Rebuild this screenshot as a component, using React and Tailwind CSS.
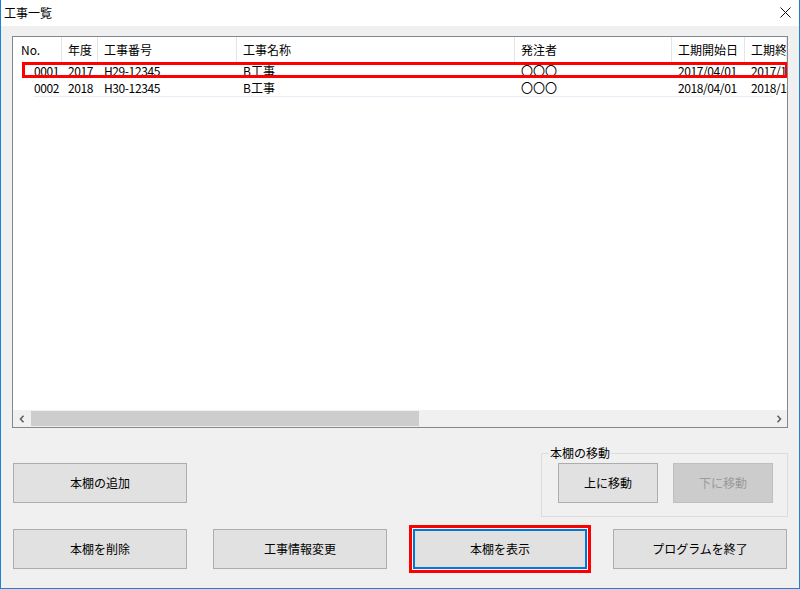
import React from "react";

const cols = [
  { label: "No.", w: 49 },
  { label: "年度", w: 36 },
  { label: "工事番号", w: 139 },
  { label: "工事名称", w: 278 },
  { label: "発注者", w: 157 },
  { label: "工期開始日", w: 73 },
  { label: "工期終了日", w: 42 },
];

const rows = [
  ["0001", "2017", "H29-12345", "B工事", "〇〇〇", "2017/04/01", "2017/10/31"],
  ["0002", "2018", "H30-12345", "B工事", "〇〇〇", "2018/04/01", "2018/10/31"],
];

function Button({ children, className = "", disabled, focused }) {
  return (
    <button
      className={
        "h-[40px] flex items-center justify-center text-[12px] " +
        (disabled
          ? "bg-[#cccccc] border border-[#bfbfbf] text-[#9a9a9a] "
          : focused
          ? "bg-[#e1e1e1] border-2 border-[#0078d7] text-black "
          : "bg-[#e1e1e1] border border-[#adadad] text-black ") +
        className
      }
    >
      {children}
    </button>
  );
}

export default function App() {
  return (
    <div className="w-[800px] h-[589px] bg-[#f0f0f0] border-x border-b border-[#1883d7] flex flex-col font-['Noto_Sans_CJK_JP',sans-serif] text-black overflow-hidden">
      {/* title bar */}
      <div className="h-[26px] bg-white flex items-center justify-between pl-[3px] pr-[8px] shrink-0">
        <span className="text-[12px] leading-none">工事一覧</span>
        <svg width="11" height="11" viewBox="0 0 11 11" className="mb-[1px]">
          <path d="M0.5 0.5 L10.5 10.5 M10.5 0.5 L0.5 10.5" stroke="#111" strokeWidth="1" fill="none" />
        </svg>
      </div>

      {/* list view */}
      <div className="ml-[11px] mt-[10px] w-[776px] h-[392px] border border-[#828790] bg-white flex flex-col relative overflow-hidden shrink-0">
        <div className="h-[25px] flex shrink-0">
          {cols.map((c, i) => (
            <div
              key={c.label}
              style={{ width: c.w }}
              className={
                "shrink-0 flex items-center text-[12px] whitespace-nowrap overflow-hidden border-r border-[#e5e5e5] " +
                (i === 0 ? "pl-[8px]" : "pl-[6px]")
              }
            >
              {c.label}
            </div>
          ))}
        </div>
        {rows.map((r, ri) => (
          <div key={ri} className="h-[17px] flex shrink-0">
            {r.map((v, i) => (
              <div
                key={i}
                style={{ width: cols[i].w }}
                className={
                  "shrink-0 flex items-center text-[12px] whitespace-nowrap overflow-hidden " +
                  (i === 0 ? "justify-end pr-[3px] " : "pl-[6px] ") +
                  (i === 3 || i === 4 ? "" : "tracking-[-0.4px]")
                }
              >
                {v}
              </div>
            ))}
          </div>
        ))}
        <div className="h-px ml-[20px] mr-[14px] bg-[#e6eef8] shrink-0" />
        <div className="flex-1" />

        {/* horizontal scrollbar */}
        <div className="h-[17px] bg-[#f0f0f0] flex items-center shrink-0">
          <div className="w-[17px] h-[17px] flex items-center justify-center">
            <svg width="6" height="8" viewBox="0 0 6 8">
              <path d="M4.5 0.8 L1.5 4 L4.5 7.2" stroke="#606060" strokeWidth="1.6" fill="none" />
            </svg>
          </div>
          <div className="w-[388px] h-[15px] bg-[#cdcdcd] ml-px" />
          <div className="flex-1" />
          <div className="w-[17px] h-[17px] flex items-center justify-center">
            <svg width="6" height="8" viewBox="0 0 6 8">
              <path d="M1.5 0.8 L4.5 4 L1.5 7.2" stroke="#606060" strokeWidth="1.6" fill="none" />
            </svg>
          </div>
        </div>

        {/* red annotation around first row */}
        <div className="absolute left-[9px] top-[25px] w-[766px] h-[16px] border-[3px] border-[#ff0000]" />
      </div>

      {/* row A */}
      <div className="mt-[25px] h-[64px] flex items-start justify-between pl-[12px] pr-[11px] shrink-0">
        <Button className="w-[174px] mt-[10px]">本棚の追加</Button>
        <div className="relative w-[247px] h-[64px] border border-[#dcdcdc] flex items-start gap-[15px] pl-[16px] pt-[9px]">
          <span className="absolute left-[7px] -top-[9px] px-[1px] bg-[#f0f0f0] text-[12px] leading-[16px]">本棚の移動</span>
          <Button className="w-[100px]">上に移動</Button>
          <Button className="w-[100px]" disabled>下に移動</Button>
        </div>
      </div>

      {/* row B */}
      <div className="mt-[12px] flex gap-[26px] pl-[12px] shrink-0">
        <Button className="w-[174px]">本棚を削除</Button>
        <Button className="w-[174px]">工事情報変更</Button>
        <div className="relative w-[174px]">
          <Button className="w-[174px]" focused>本棚を表示</Button>
          <div className="absolute -inset-[4px] border-[3px] border-[#ff0000]" />
        </div>
        <Button className="w-[174px]">プログラムを終了</Button>
      </div>
    </div>
  );
}
